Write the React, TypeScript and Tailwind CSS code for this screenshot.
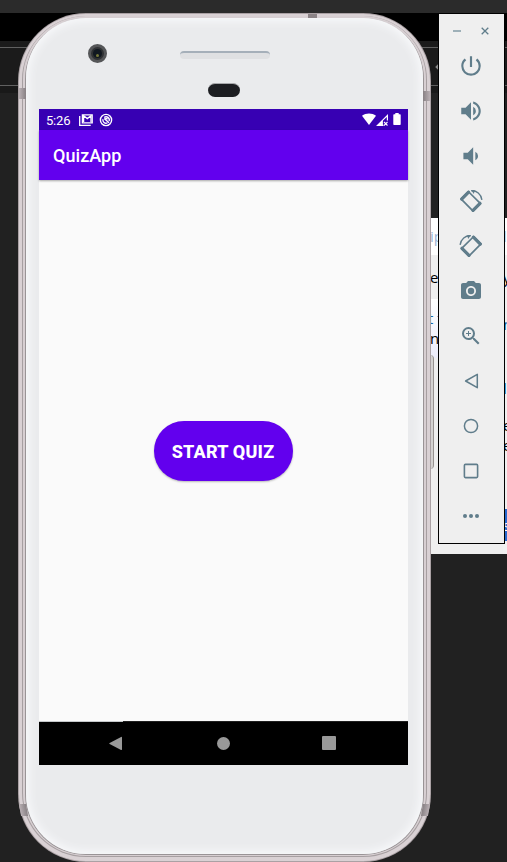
import React from "react";
import {
  MdCameraAlt,
  MdPowerSettingsNew,
  MdVolumeDown,
  MdVolumeUp,
  MdZoomIn,
} from "react-icons/md";

function RotateIcon({ mirrored = false }: { mirrored?: boolean }) {
  return (
    <svg viewBox="0 0 24 24" className={mirrored ? "size-6 -scale-x-100" : "size-6"} fill="none" stroke="currentColor">
      <path d="M9.3 2.5 2 9.9l12.1 12.2 7.4-7.4z" strokeWidth="1.7" strokeLinejoin="round" />
      <path d="M9.6 3.2 2.7 10.1M21 14.3l-7 7" strokeWidth="3.2" strokeLinecap="round" />
      <path d="M12.3 1.8c5.3-.4 9.8 3.4 10.6 9" strokeWidth="1.4" />
      <path d="M12 1.1h3.8l-.9 3.8z" fill="currentColor" stroke="none" />
    </svg>
  );
}

const tools: { name: string; icon: React.ReactNode }[] = [
  { name: "Power", icon: <MdPowerSettingsNew size={26} /> },
  { name: "Volume up", icon: <MdVolumeUp size={26} /> },
  { name: "Volume down", icon: <MdVolumeDown size={26} /> },
  { name: "Rotate left", icon: <RotateIcon /> },
  { name: "Rotate right", icon: <RotateIcon mirrored /> },
  { name: "Take screenshot", icon: <MdCameraAlt size={24} /> },
  { name: "Zoom", icon: <MdZoomIn size={24} /> },
  {
    name: "Back",
    icon: (
      <svg viewBox="0 0 24 24" className="size-6" fill="none" stroke="currentColor" strokeWidth="1.5" strokeLinejoin="round">
        <path d="M18.3 5.3v13.4L6.6 12z" />
      </svg>
    ),
  },
  {
    name: "Home",
    icon: (
      <svg viewBox="0 0 24 24" className="size-6" fill="none" stroke="currentColor" strokeWidth="1.5">
        <circle cx="12" cy="12" r="6.6" />
      </svg>
    ),
  },
  {
    name: "Overview",
    icon: (
      <svg viewBox="0 0 24 24" className="size-6" fill="none" stroke="currentColor" strokeWidth="1.6">
        <rect x="5.4" y="5.4" width="13.2" height="13.2" rx="1" />
      </svg>
    ),
  },
  {
    name: "More",
    icon: (
      <span className="flex gap-0.5">
        <i className="size-1 rounded-full bg-current" />
        <i className="size-1 rounded-full bg-current" />
        <i className="size-1 rounded-full bg-current" />
      </span>
    ),
  },
];

function Desktop() {
  return (
    <div className="flex h-full flex-col">
      <div className="h-[13px] bg-[#2b2b2b]" />
      <div className="h-7 bg-black" />
      <div className="h-1.5 bg-[#1b1b1b]" />
      <div className="flex h-[39px] items-center justify-end border-y border-[#606060] bg-[#1b1b1b] pr-[67px]">
        <span className="size-1 rotate-45 bg-[#8b8b8b]" />
      </div>
      <div className="h-[7px] bg-[#191919]" />
      <div className="h-[125px] bg-[#212121]" />
      <div className="flex h-[336px]">
        <div className="w-[430px] bg-[#212121]" />
        <div className="flex flex-1 justify-between overflow-hidden bg-[#efefef] font-['Open_Sans',sans-serif] text-[15px] leading-5 text-black">
          <div className="w-2 overflow-hidden">
            <div className="h-[37px] bg-white pt-2 text-[#9ab5d5]">ip</div>
            <div className="h-11 pt-3">e</div>
            <div className="h-[59px] bg-gradient-to-b from-white to-[#ececfa] pt-[9px]">
              <div className="-ml-0.5 whitespace-nowrap text-[#1565a8]">t t</div>
              <div>n</div>
            </div>
          </div>
          <div className="w-[4px] overflow-hidden bg-[#f1f1f1]">
            <div className="h-[37px] bg-white pt-2 text-[#a9c7e9]">l</div>
            <div className="h-[59px] pt-3 underline">y</div>
            <div className="h-16 text-[#0d60a8]">n</div>
            <div className="h-[37px] text-[#0d60a8]">l</div>
            <div>e</div>
            <div className="h-[74px]">e</div>
            <div className="h-8 bg-[#2869ce] pt-1.5 text-white">s</div>
          </div>
        </div>
      </div>
      <div className="flex-1 bg-[#212121]" />
    </div>
  );
}

function StatusBar() {
  return (
    <div className="flex h-[21px] items-center bg-[#3700b3] pl-[7px] pr-[7px] text-white">
      <span className="mt-px text-[13px] leading-none tracking-[-0.2px]">5:26</span>
      <svg viewBox="0 0 14 12" className="ml-[9px] h-3 w-3.5" fill="none" stroke="currentColor" strokeWidth="1.3">
        <path d="M.7 2v9.3h11" />
        <path d="M3.4.8h9.8v8H3.4z" />
        <path d="m4 1.2 4.3 3.4 4.3-3.4M4.6 2v6M12 2v6" />
      </svg>
      <svg viewBox="0 0 14 14" className="ml-1.5 size-3.5" fill="none" stroke="currentColor">
        <circle cx="7" cy="7" r="5.6" strokeWidth="1.4" />
        <path d="M8.4 9.8A3.1 3.1 0 0 1 4 6.2M5.2 4.5a3.1 3.1 0 0 1 4.9 3.4M5.2 5.4l4.8 4.4" strokeWidth="1.4" />
        <path d="M5.6 5h3v1.6H7z" fill="currentColor" stroke="none" />
      </svg>
      <svg viewBox="0 0 14 12" className="-mt-px ml-auto h-3 w-3.5" fill="currentColor">
        <path d="M0 2.7C4-.3 10-.3 14 2.7L7 12z" />
      </svg>
      <svg viewBox="0 0 12 12" className="size-3" fill="currentColor">
        <path fillRule="evenodd" d="M12 0v6.5h-1.2V3L6.9 6.8v3.9h.6V12H0z" />
        <path d="m8 8 3.5 3.5M11.5 8 8 11.5" stroke="currentColor" strokeWidth="1.1" />
      </svg>
      <svg viewBox="0 0 8 12" className="-mt-px ml-[5px] h-3 w-2" fill="currentColor">
        <path d="M2.3 0h3.4v1.2H7q.7 0 .7.7v9.3q0 .8-.7.8H1q-.7 0-.7-.8V1.9q0-.7.7-.7h1.3z" />
      </svg>
    </div>
  );
}

function Phone() {
  return (
    <div className="relative h-[849px] w-[413px]">
      <div className="absolute right-[-3px] top-[342px] h-[114px] w-2 rounded-r-sm border-r border-[#96918f] bg-[#d4d2d1]" />
      <div className="relative h-full rounded-[68px] bg-[#aaa1a4] p-px">
        <div className="h-full rounded-[67px] bg-[#d9d1d4] px-[3px] pb-1 pt-[2px]">
          <div className="h-full rounded-[64px] bg-[#a69fa1] px-px pb-px">
            <div className="h-full rounded-[63px] bg-[#d7cfd2] px-[2px] pb-[1px] pt-[2px]">
              <div className="h-full rounded-[61px] bg-[#999496] px-px pb-px">
                <div className="flex h-full flex-col rounded-[60px] bg-[#eaebed] px-[13px] shadow-[inset_0_0_9px_3px_#f8f9fb]">
                  <div className="flex h-[91px] flex-col items-center">
                    <div className="flex h-12 w-full items-end pl-[49px]">
                      <div className="mb-[3px] flex size-[19px] items-center justify-center rounded-full border-[3px] border-[#555658] bg-[#303234]">
                        <div className="flex size-[9px] items-center justify-center rounded-full bg-[#111820]">
                          <i className="mt-1 size-[3px] rounded-full bg-[#77783a]" />
                        </div>
                      </div>
                      <div className="mb-[7px] ml-[73px] h-2 w-[90px] rounded-[4px] border-t-2 border-[#a5afb9] bg-[#dfe0e2]" />
                    </div>
                    <div className="-ml-0.5 mt-[17px] h-[14px] w-8 rounded-full border-t border-[#a8a9ac] bg-[#1d1e22]" />
                  </div>
                  <div className="flex h-[656px] w-[369px] flex-col bg-[#fafafa] font-[Roboto,sans-serif]">
                    <StatusBar />
                    <header className="z-10 flex h-[50px] items-center bg-[#6200ee] pl-3.5 text-[18px] font-medium text-white shadow-[0_1px_2px_#0005]">
                      <span className="mt-px tracking-[0.05px]">QuizApp</span>
                    </header>
                    <main className="flex flex-1 items-center justify-center pr-px">
                      <button className="h-[60px] w-[139px] rounded-[30px] bg-[#6200ee] pt-px text-[18px] font-extrabold tracking-[0.2px] text-white shadow-[0_1px_2px_#0004]">
                        START QUIZ
                      </button>
                    </main>
                    <div className="flex h-px bg-[#202020]">
                      <i className="w-[84px] bg-[#c5c8ca]" />
                    </div>
                    <nav className="flex h-[43px] items-center bg-black pb-px pl-[70px] text-[#999]">
                      <svg viewBox="0 0 14 15" className="h-[15px] w-[13px]" fill="currentColor">
                        <path d="M13 .5q1-.5 1 .7v12.6q0 1-1 .6L.7 8q-.8-.5 0-1z" />
                      </svg>
                      <i className="ml-[95px] size-[13px] rounded-full bg-current" />
                      <i className="ml-[92px] size-[14px] rounded-[1px] bg-current" />
                    </nav>
                  </div>
                </div>
              </div>
            </div>
          </div>
        </div>
      </div>
      <i className="absolute left-[290px] top-px h-1 w-[9px] bg-[#8b8386]" />
      <i className="absolute left-px top-[75px] h-[11px] w-[7px] bg-gradient-to-r from-[#b9b0b4] to-[#888184]" />
      <i className="absolute right-px top-[78px] h-[10px] w-[7px] bg-gradient-to-r from-[#888184] to-[#b9b0b4]" />
      <i className="absolute bottom-[46px] left-[2px] h-3 w-[7px] skew-x-[10deg] bg-gradient-to-r from-[#b9b0b4] to-[#888184]" />
      <i className="absolute bottom-[46px] right-[2px] h-3 w-[7px] -skew-x-[10deg] bg-gradient-to-r from-[#888184] to-[#b9b0b4]" />
    </div>
  );
}

function Toolbar() {
  return (
    <aside className="flex h-[531px] w-[67px] flex-col items-center border border-black bg-[#efefef] text-[#607d8b]">
      <div className="flex h-[29px] w-full shrink-0 items-center pl-[14px] pt-[5px]">
        <i className="h-0.5 w-2 bg-[#9eb0b8]" />
        <svg viewBox="0 0 8 8" className="ml-5 size-2" stroke="currentColor" strokeWidth="1.3">
          <path d="m.7.7 6.6 6.6M7.3.7.7 7.3" />
        </svg>
      </div>
      {tools.map(({ name, icon }) => (
        <button key={name} aria-label={name} className="flex h-[45px] w-full shrink-0 items-center justify-center pr-px">
          {icon}
        </button>
      ))}
    </aside>
  );
}

export default function App() {
  return (
    <div className="relative h-[862px] w-[507px] overflow-hidden">
      <Desktop />
      <div className="absolute left-[18px] top-[13px]">
        <Phone />
      </div>
      <div className="absolute left-[438px] top-[13px]">
        <Toolbar />
      </div>
    </div>
  );
}
